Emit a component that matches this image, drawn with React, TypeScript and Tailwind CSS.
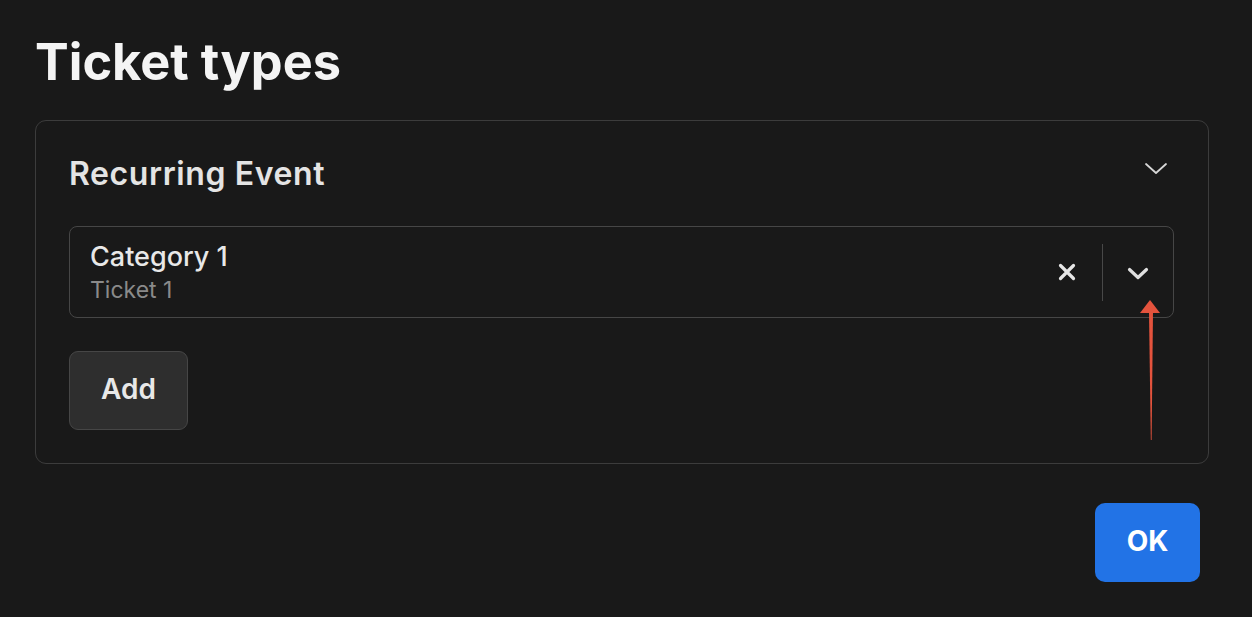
// Ticket types dialog
const font = { fontFamily: "Inter, 'Noto Sans', sans-serif" };

function ChevronThin() {
  return (
    <svg width="24" height="14" viewBox="0 0 24 14" fill="none">
      <polyline points="2,2 12,11 22,2" stroke="#d6d6d6" strokeWidth="1.8" strokeLinecap="round" strokeLinejoin="round" />
    </svg>
  );
}

function ChevronBold() {
  return (
    <svg width="22" height="14" viewBox="0 0 22 14" fill="none">
      <polyline points="2.5,2.5 11,10.5 19.5,2.5" stroke="#e0e0e0" strokeWidth="3.2" strokeLinecap="round" strokeLinejoin="round" />
    </svg>
  );
}

function XIcon() {
  return (
    <svg width="18" height="18" viewBox="0 0 18 18" fill="none">
      <path d="M2.5 2.5 L15.5 15.5 M15.5 2.5 L2.5 15.5" stroke="#e6e6e6" strokeWidth="3.2" strokeLinecap="round" />
    </svg>
  );
}

function Arrow() {
  return (
    <svg className="absolute left-[1136px] top-[298px]" width="28" height="146" viewBox="0 0 28 146" fill="none">
      <path d="M13 14 L17 14 L15.6 142 L14.8 142 Z" fill="#e4533d" />
      <path d="M14 2 L24 15 L4 15 Z" fill="#e4533d" />
    </svg>
  );
}

export default function App() {
  return (
    <div className="relative w-[1252px] h-[617px] bg-[#191919] pl-[35px]" style={font}>
      <div className="h-[120px] pt-[4px] flex items-center">
        <h1 className="text-[50.5px] font-bold leading-none text-[#f4f4f4]">Ticket types</h1>
      </div>

      <div className="w-[1174px] border border-[#3c3c3c] rounded-[11px] pl-[33px] pr-[34px] pb-[33px]">
        <div className="h-[105px] flex items-center justify-between">
          <span className="text-[32px] font-semibold text-[#e4e4e4] tracking-[0.6px]">Recurring Event</span>
          <span className="mr-[6px] -mt-[10px]">
            <ChevronThin />
          </span>
        </div>

        <div className="h-[92px] border border-[#464646] rounded-[8px] pl-[20px] pr-[24px] flex items-center">
          <div className="flex-1 flex flex-col pt-[2px]">
            <span className="text-[27px] font-medium leading-[34px] text-[#e8e8e8]">Category 1</span>
            <span className="text-[23px] leading-[32px] text-[#8a8a8a]">Ticket 1</span>
          </div>
          <XIcon />
          <div className="w-px h-[57px] bg-[#484848] ml-[26px] mr-[24px]" />
          <span className="mt-[4px]">
            <ChevronBold />
          </span>
        </div>

        <button className="mt-[33px] w-[119px] h-[79px] pb-[3px] bg-[#2e2e2e] border border-[#464646] rounded-[9px] text-[28px] font-semibold text-[#e8e8e8]">
          Add
        </button>
      </div>

      <div className="w-[1174px] flex justify-end pr-[9px] mt-[39px]">
        <button className="w-[105px] h-[79px] pb-[3px] bg-[#2273e6] rounded-[10px] text-[28px] font-bold text-white">
          OK
        </button>
      </div>

      <Arrow />
    </div>
  );
}
